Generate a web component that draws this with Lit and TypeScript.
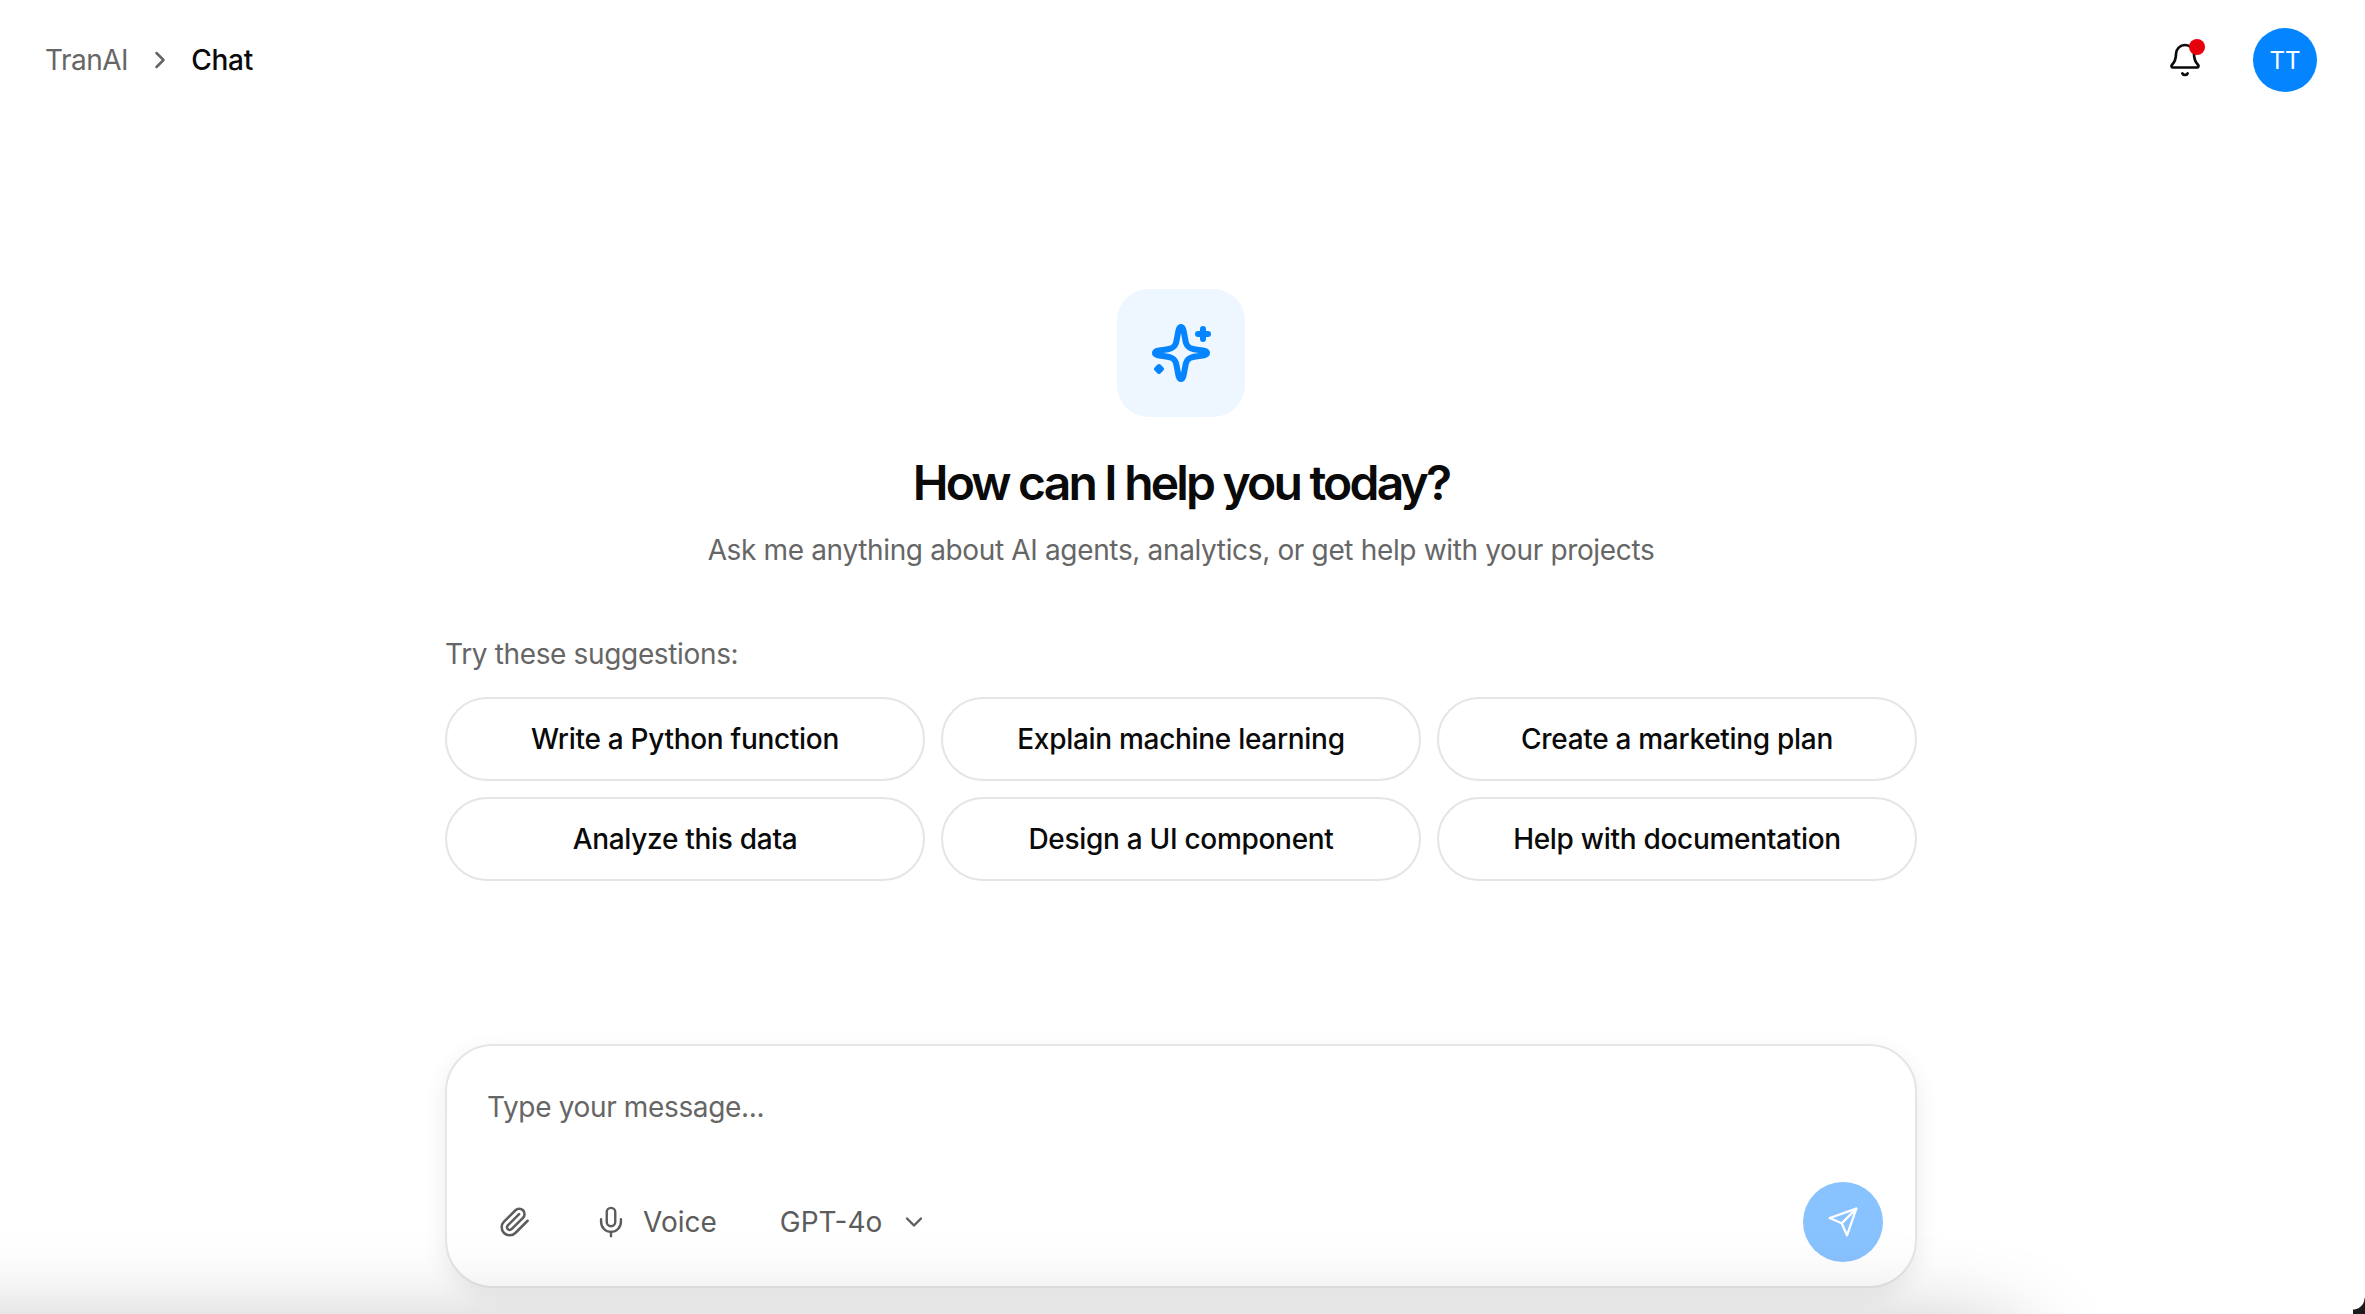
import { LitElement, html, css, svg } from "lit";
import { customElement } from "lit/decorators.js";

const suggestions = [
  "Write a Python function",
  "Explain machine learning",
  "Create a marketing plan",
  "Analyze this data",
  "Design a UI component",
  "Help with documentation",
];

function icon(size: number, stroke: number, body: unknown) {
  return html`<svg
    width=${size}
    height=${size}
    viewBox="0 0 24 24"
    fill="none"
    stroke="currentColor"
    stroke-width=${stroke}
    stroke-linecap="round"
    stroke-linejoin="round"
  >${body}</svg>`;
}

const chevronRight = svg`<path d="m9 18 6-6-6-6" />`;
const chevronDown = svg`<path d="m6 9 6 6 6-6" />`;
const bell = svg`
  <path d="M10.268 21a2 2 0 0 0 3.464 0" />
  <path d="M3.262 15.326A1 1 0 0 0 4 17h16a1 1 0 0 0 .74-1.673C19.41 13.956 18 12.499 18 8A6 6 0 0 0 6 8c0 4.499-1.411 5.956-2.738 7.326" />
`;
const clip = svg`<path d="m21.44 11.05-9.19 9.19a6 6 0 0 1-8.49-8.49l8.57-8.57A4 4 0 1 1 18 8.84l-8.59 8.57a2 2 0 0 1-2.83-2.83l8.49-8.48" />`;
const mic = svg`
  <path d="M12 2a3 3 0 0 0-3 3v7a3 3 0 0 0 6 0V5a3 3 0 0 0-3-3Z" />
  <path d="M19 10v2a7 7 0 0 1-14 0v-2" />
  <path d="M12 19v3" />
`;
const send = svg`
  <path d="m22 2-7 20-4-9-9-4Z" />
  <path d="M22 2 11 13" />
`;

@customElement("app-root")
export class AppRoot extends LitElement {
  protected render() {
    return html`
      <div class="page">
        <header class="top">
          <nav class="crumbs">
            <span class="crumb-root">TranAI</span>
            <span class="crumb-sep">${icon(28, 2.2, chevronRight)}</span>
            <span class="crumb-current">Chat</span>
          </nav>
          <div class="top-actions">
            <div class="bell">
              ${icon(36, 1.8, bell)}
              <span class="dot"></span>
            </div>
            <div class="avatar">TT</div>
          </div>
        </header>

        <main class="main">
          <div class="tile">
            <svg width="64" height="64" viewBox="0 0 64 64" fill="none" stroke="currentColor" stroke-width="6" stroke-linecap="round" stroke-linejoin="round">
              <path d="M32 6C35 6 35 14 37 22C38.5 26 40 27 44 28C50 29.5 58 29 58 32C58 35 50 34.5 44 36C40 37 38.5 38 37 42C35 50 35 58 32 58C29 58 29 50 27 42C25.5 38 24 37 20 36C14 34.5 6 35 6 32C6 29 14 29.5 20 28C24 27 25.5 26 27 22C29 14 29 6 32 6Z" />
              <path d="M54 8v10M49 13h10" />
              <path d="M10 45l3 3-3 3-3-3Z" fill="currentColor" stroke-width="4" />
            </svg>
          </div>
          <h1 class="title">How can I help you today?</h1>
          <p class="subtitle">Ask me anything about AI agents, analytics, or get help with your projects</p>

          <section class="suggest">
            <div class="suggest-label">Try these suggestions:</div>
            <div class="suggest-grid">
              ${suggestions.map((s) => html`<button class="chip">${s}</button>`)}
            </div>
          </section>

          <section class="composer">
            <div class="placeholder">Type your message...</div>
            <div class="tools">
              <span class="tool-clip">${icon(32, 1.9, clip)}</span>
              <span class="tool-voice">${icon(34, 1.7, mic)}<span>Voice</span></span>
              <span class="tool-model">GPT-4o ${icon(28, 2, chevronDown)}</span>
              <button class="send">${icon(32, 1.7, send)}</button>
            </div>
          </section>
        </main>

        <div class="bottom-haze"></div>
        <div class="corner"></div>
      </div>
    `;
  }

  static styles = css`
    :host {
      display: block;
      font-family: Inter, "Liberation Sans", sans-serif;
      color: #0a0a0a;
    }

    .page {
      position: relative;
      height: 1314px;
      overflow: hidden;
      background: #fff;
      display: flex;
      flex-direction: column;
    }

    .top {
      height: 120px;
      padding: 0 48px 0 45px;
      display: flex;
      align-items: center;
      justify-content: space-between;
      box-sizing: border-box;
    }

    .crumbs {
      display: flex;
      align-items: center;
      font-size: 28px;
    }

    .crumb-root {
      color: #666;
      letter-spacing: -0.5px;
    }

    .crumb-sep {
      display: flex;
      margin: 0 17px 0 18px;
      color: #666;
    }

    .crumb-current {
      font-weight: 500;
      letter-spacing: -0.25px;
    }

    .top-actions {
      display: flex;
      align-items: center;
      gap: 50px;
    }

    .bell {
      position: relative;
      display: flex;
      color: #0a0a0a;
    }

    .dot {
      position: absolute;
      top: -3px;
      right: -2px;
      width: 16px;
      height: 16px;
      border-radius: 50%;
      background: #e7000b;
    }

    .avatar {
      width: 64px;
      height: 64px;
      border-radius: 50%;
      background: #0485ff;
      color: #fff;
      font-size: 24px;
      display: flex;
      align-items: center;
      justify-content: center;
    }

    .main {
      display: flex;
      flex-direction: column;
      align-items: center;
      padding-top: 169px;
      padding-right: 3px;
    }

    .tile {
      width: 128px;
      height: 128px;
      border-radius: 32px;
      background: #eef6ff;
      color: #0485ff;
      display: flex;
      align-items: center;
      justify-content: center;
    }

    .title {
      margin: 42px 0 0;
      font-size: 48px;
      line-height: 48px;
      font-weight: 600;
      letter-spacing: -2.8px;
      color: #0a0a0a;
    }

    .subtitle {
      margin: 23px 0 0;
      font-size: 28px;
      line-height: 40px;
      letter-spacing: -0.35px;
      color: #666;
    }

    .suggest {
      width: 1472px;
      margin-top: 64px;
    }

    .suggest-label {
      font-size: 28px;
      line-height: 40px;
      letter-spacing: -0.35px;
      color: #666;
    }

    .suggest-grid {
      margin-top: 23px;
      display: grid;
      grid-template-columns: repeat(3, 1fr);
      gap: 16px;
    }

    .chip {
      height: 84px;
      border: 2px solid #e5e5e5;
      border-radius: 42px;
      background: #fff;
      font: inherit;
      font-size: 28px;
      font-weight: 500;
      letter-spacing: -0.3px;
      color: #0a0a0a;
    }

    .composer {
      width: 1472px;
      height: 244px;
      margin-top: 163px;
      box-sizing: border-box;
      border: 2px solid #e5e5e5;
      border-radius: 48px;
      background: #fff;
      box-shadow: 0 8px 24px rgba(0, 0, 0, 0.08);
      padding: 41px 32px 0 40px;
      display: flex;
      flex-direction: column;
    }

    .placeholder {
      font-size: 28px;
      line-height: 40px;
      letter-spacing: -0.35px;
      color: #666;
    }

    .tools {
      margin-top: 55px;
      display: flex;
      align-items: center;
      font-size: 28px;
      color: #5c5c5c;
    }

    .tool-clip {
      display: flex;
      margin-left: 12px;
    }

    .tool-voice {
      display: flex;
      align-items: center;
      gap: 15px;
      margin-left: 63px;
    }

    .tool-model {
      display: flex;
      align-items: center;
      gap: 18px;
      margin-left: 63px;
    }

    .send {
      margin-left: auto;
      width: 80px;
      height: 80px;
      border: none;
      border-radius: 50%;
      background: #88c2ff;
      color: #fff;
      display: flex;
      align-items: center;
      justify-content: center;
      padding: 0;
    }

    .bottom-haze {
      position: absolute;
      left: -200px;
      right: 340px;
      top: 1340px;
      height: 100px;
      box-shadow: 0 0 100px 0 rgba(0, 0, 0, 0.33);
      background: rgba(0, 0, 0, 0.33);
      border-radius: 100px;
      pointer-events: none;
    }

    .corner {
      position: absolute;
      right: 0;
      bottom: 0;
      width: 12px;
      height: 16px;
      background: radial-gradient(circle at 0 0, transparent 11px, #1c1c1c 12px);
    }
  `;
}
